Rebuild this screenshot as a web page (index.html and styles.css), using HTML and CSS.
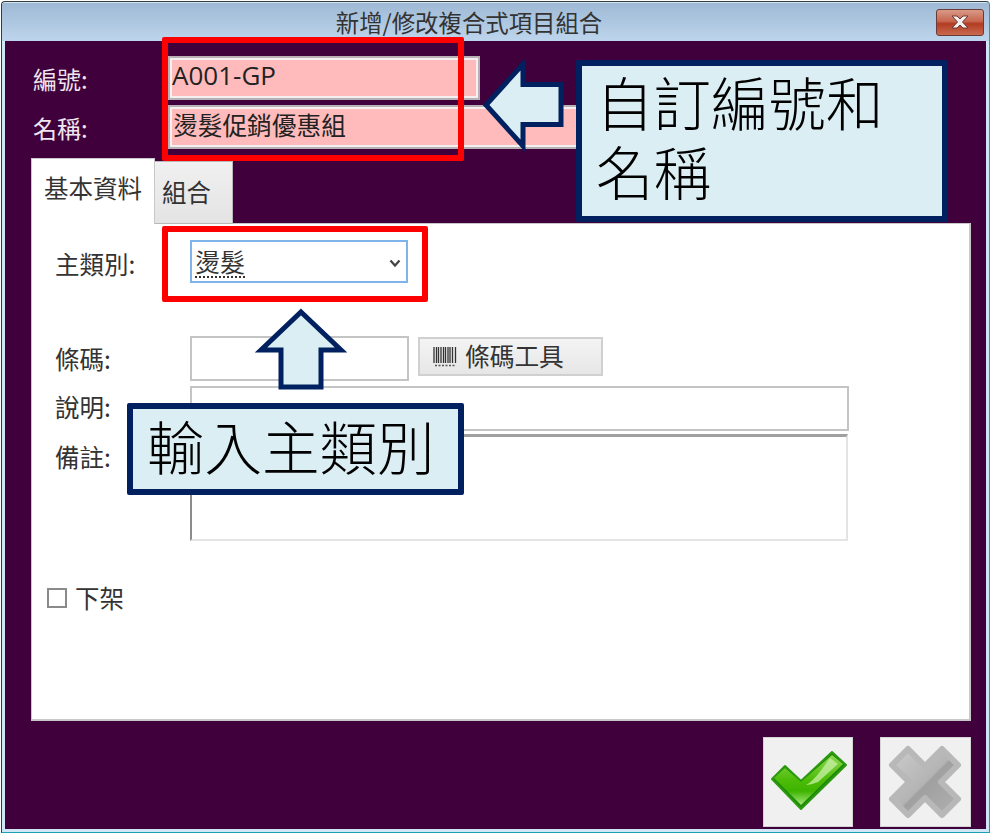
FILE: index.html
```html
<!DOCTYPE html>
<html lang="zh-Hant">
<head>
<meta charset="utf-8">
<title>新增/修改複合式項目組合</title>
<link rel="stylesheet" href="styles.css">
</head>
<body>
<div class="stage">
  <div class="window">
    <div class="titlebar">
      <div class="title">新增/修改複合式項目組合</div>
      <div class="close">
        <svg width="24" height="16" viewBox="0 0 24 16"><path d="M4 2h5l3 3 3-3h5l-5.500 6 5.500 6h-5l-3-3-3 3H4l5.500-6z" fill="#f4eeee" stroke="#6b3a36" stroke-width="1"/></svg>
      </div>
    </div>
    <div class="body">
      <div class="field-row">
        <div class="head-label">編號:</div>
        <div class="pink pink-code">A001-GP</div>
      </div>
      <div class="field-row second">
        <div class="head-label">名稱:</div>
        <div class="pink pink-name">燙髮促銷優惠組</div>
      </div>
      <div class="tabs">
        <div class="tab tab-active">基本資料</div>
        <div class="tab tab-idle">組合</div>
      </div>
      <div class="panel">
        <div class="row">
          <div class="label label-main">主類別:</div>
          <div class="select"><span class="select-text">燙髮</span>
            <svg class="chev" width="12" height="9" viewBox="0 0 12 9"><path d="M1.500 1.500 6 6.500l4.500-5" fill="none" stroke="#444" stroke-width="2.200"/></svg>
          </div>
        </div>
        <div class="row row-barcode">
          <div class="label label-barcode">條碼:</div>
          <div class="box box-barcode"></div>
          <div class="barcode-btn">
            <svg class="barcode-icon" width="24" height="21" viewBox="0 0 24 21">
              <path d="M1 1v16M3.500 1v16M5.500 1v16M8 1v16M10.500 1v16M12.500 1v16M15 1v16M17 1v16M19.500 1v16M22.500 1v16" stroke="#333" stroke-width="1.300"/>
              <path d="M2 19.500h20" stroke="#555" stroke-width="1.500" stroke-dasharray="2 1.500"/>
            </svg>
            <span>條碼工具</span>
          </div>
        </div>
        <div class="row row-desc">
          <div class="label label-desc">說明:</div>
          <div class="box box-desc"></div>
        </div>
        <div class="row row-note">
          <div class="label label-note">備註:</div>
          <div class="box-note"></div>
        </div>
        <div class="check-row">
          <div class="checkbox"></div>
          <div class="check-label">下架</div>
        </div>
      </div>
      <div class="actions">
        <div class="action">
          <svg width="90" height="90" viewBox="0 0 90 90">
            <defs>
              <linearGradient id="gc" x1="0" y1="0" x2="0" y2="1">
                <stop offset="0" stop-color="#8ed850"/>
                <stop offset=".5" stop-color="#4cbc08"/>
                <stop offset=".72" stop-color="#3eb400"/>
                <stop offset="1" stop-color="#a4e878"/>
              </linearGradient>
            </defs>
            <path d="M9 42 22 29l16 15L69 15l14 13-45 44z" fill="#1f8a08" stroke="#2b9a10" stroke-width="2" stroke-linejoin="round"/>
            <path d="M11 41 22 31l16 14L69 18l11 9-42 41z" fill="url(#gc)"/>
            <path d="M67 21l8 6-20 18c-5 2-9 3-12 3 9-5 16-16 24-27z" fill="#c9f0a8" opacity=".75"/>
          </svg>
        </div>
        <div class="action">
          <svg width="91" height="90" viewBox="0 0 91 90">
            <defs>
              <linearGradient id="gx" x1="0" y1="0" x2="1" y2="1">
                <stop offset="0" stop-color="#cccccc"/>
                <stop offset=".5" stop-color="#b4b4b4"/>
                <stop offset=".53" stop-color="#a0a0a0"/>
                <stop offset="1" stop-color="#b0b0b0"/>
              </linearGradient>
            </defs>
            <path d="M45 29 62 12 78 28 61 45l17 17-16 16-17-17-17 17-16-16 17-17-17-17 16-16z" fill="url(#gx)" stroke="#b8b8b8" stroke-width="6" stroke-linejoin="round"/>
          </svg>
        </div>
      </div>
    </div>
  </div>

  <div class="redbox redbox-top"></div>
  <div class="redbox redbox-select"></div>

  <svg class="arrow arrow-left" width="84" height="92" viewBox="0 0 84 92">
    <path d="M4 45 41 4v20.500h38v40H41V86z" fill="#daeef3" stroke="#002060" stroke-width="5"/>
  </svg>
  <svg class="arrow arrow-up" width="92" height="84" viewBox="0 0 92 84">
    <path d="M46 5 86 43H66v37H26V43H6z" fill="#daeef3" stroke="#002060" stroke-width="5"/>
  </svg>

  <div class="callout callout-name">自訂編號和<br>名稱</div>
  <div class="callout callout-type">輸入主類別</div>
</div>
</body>
</html>
```

FILE: styles.css
```css
* { box-sizing: border-box; }
html, body { margin: 0; padding: 0; background: #fff; }
body { font-family: "Noto Sans CJK TC", "Liberation Sans", sans-serif; color: #333; }

.stage { position: relative; width: 992px; height: 835px; overflow: hidden; }

.window {
  width: 989px;
  height: 832px;
  margin: 1px 0 0 1px;
  border: 1px solid #3a3a3a;
  border-right-color: #1d9fb4;
  border-bottom-color: #1d9fb4;
  border-radius: 4px 4px 0 0;
  background: #cfe6f4;
  padding: 1px 3px 3px 3px;
  display: flex;
  flex-direction: column;
}

.titlebar {
  height: 38px;
  margin: 0 -3px;
  padding-right: 5px;
  display: flex;
  align-items: center;
  background: linear-gradient(#9fb9d5, #bdd5ec);
}
.title { flex: 1; text-align: center; font-size: 23.400px; line-height: 38px; color: #333; }
.close {
  width: 48px;
  height: 27px;
  margin-top: 0;
  border: 1px solid #6b3a36;
  border-radius: 3px;
  background: linear-gradient(#d99a88 0, #c7664e 45%, #b23c22 55%, #c96a50 100%);
  display: flex;
  align-items: center;
  justify-content: center;
}

.body {
  flex: 1;
  background: #40003c;
  padding: 15px 15px 0 26px;
  display: flex;
  flex-direction: column;
}

.field-row { display: flex; padding-left: 2px; height: 44px; }
.field-row.second { margin-top: 5px; }
.head-label { width: 135px; color: #eee6ee; font-size: 24px; line-height: 46px; }
.pink {
  height: 44px;
  background: #ffbbbb;
  border: 2px solid #b8b0b4;
  box-shadow: inset 0 0 0 2px #f4f0f0;
  color: #222;
  font-size: 24.700px;
  line-height: 34px;
  padding-left: 4px;
}
.pink-code { width: 312px; font-family: "Open Sans", "Noto Sans", sans-serif; font-size: 26px; padding-left: 2px; }
.pink-name { width: 680px; padding-left: 3px; }

.tabs { display: flex; align-items: flex-end; height: 66px; margin-top: 9px; margin-bottom: -1px; position: relative; }
.tab { font-size: 24.500px; }
.tab-active {
  width: 124px;
  height: 66px;
  background: #fff;
  border: 1px solid #c8c8c8;
  border-bottom: 0;
  padding: 10px 0 0 12px;
  line-height: 38px;
}
.tab-idle {
  width: 78px;
  height: 63px;
  background: linear-gradient(#f0f0f0, #e4e4e4);
  border: 1px solid #b8b8b8;
  border-left: 0;
  padding: 11px 0 0 7px;
  line-height: 38px;
}

.panel {
  height: 498px;
  background: #fff;
  border: 1px solid #c8c8c8;
  border-bottom-width: 2px;
  border-right-width: 2px;
  padding: 16px 0 0 23px;
}
.row { display: flex; }
.label { width: 135px; font-size: 24.500px; line-height: 36px; color: #333; flex: none; }
.label-main { padding-top: 6px; }
.label-barcode { padding-top: 5px; }
.label-desc { padding-top: 3px; }
.label-note { padding-top: 5px; }

.select {
  width: 218px;
  height: 43px;
  border: 2px solid #7eb4ea;
  padding: 0 5px 0 3px;
  display: flex;
  align-items: flex-start;
  justify-content: space-between;
}
.select-text { font-size: 25px; line-height: 36px; padding-top: 1px; height: 36px; border-bottom: 2px dotted #333; color: #333; }
.chev { margin: 17px 0 0; }

.row-barcode { margin-top: 53px; height: 44px; }
.box { border: 2px solid #c4c4c4; background: #fff; }
.box-barcode { width: 219px; height: 45px; }
.barcode-btn {
  width: 185px;
  height: 39px;
  margin: 1px 0 0 9px;
  background: linear-gradient(#f4f4f4, #e6e6e6);
  border: 2px solid #d0d0d0;
  display: flex;
  align-items: center;
  font-size: 24.700px;
  line-height: 32px;
  color: #333;
  padding: 0 0 4px 13px;
}
.barcode-icon { margin: 4px 8px 0 0; }

.row-desc { margin-top: 6px; height: 45px; }
.box-desc { width: 659px; height: 45px; }

.row-note { margin-top: 3px; height: 107px; }
.box-note {
  width: 658px;
  height: 107px;
  border: 2px solid #e4e4e4;
  border-top: 3px solid #a0a0a0;
  border-left: 2px solid #8c8c8c;
}

.check-row { display: flex; align-items: center; margin-top: 46px; margin-left: -8px; height: 22px; }
.checkbox { width: 20px; height: 20px; border: 2px solid #8a8a8a; background: #fff; }
.check-label { margin-left: 8px; font-size: 24.500px; line-height: 22px; color: #333; }

.actions { display: flex; justify-content: flex-end; gap: 27px; margin-top: 16px; }
.action { height: 90px; background: #f0f0f0; border: 1px solid #d4d4d4; }
.action svg { display: block; margin: -1px; }

.redbox { position: absolute; border: 6px solid #ff0000; border-radius: 2px; }
.redbox-top { left: 162px; top: 37px; width: 302px; height: 124px; }
.redbox-select { left: 162px; top: 226px; width: 266px; height: 76px; }

.arrow { position: absolute; }
.arrow-left { left: 482px; top: 60px; }
.arrow-up { left: 255px; top: 307px; }

.callout {
  position: absolute;
  background: #daeef3;
  border: 6px solid #002060;
  border-radius: 2px;
  color: #000;
  font-size: 57.500px;
  font-weight: 300;
  line-height: 69px;
}
.callout-name { left: 576px; top: 60px; width: 372px; height: 162px; padding: 1px 0 0 14px; }
.callout-type { left: 127px; top: 403px; width: 337px; height: 92px; padding: 2px 0 0 14px; white-space: nowrap; }
```
